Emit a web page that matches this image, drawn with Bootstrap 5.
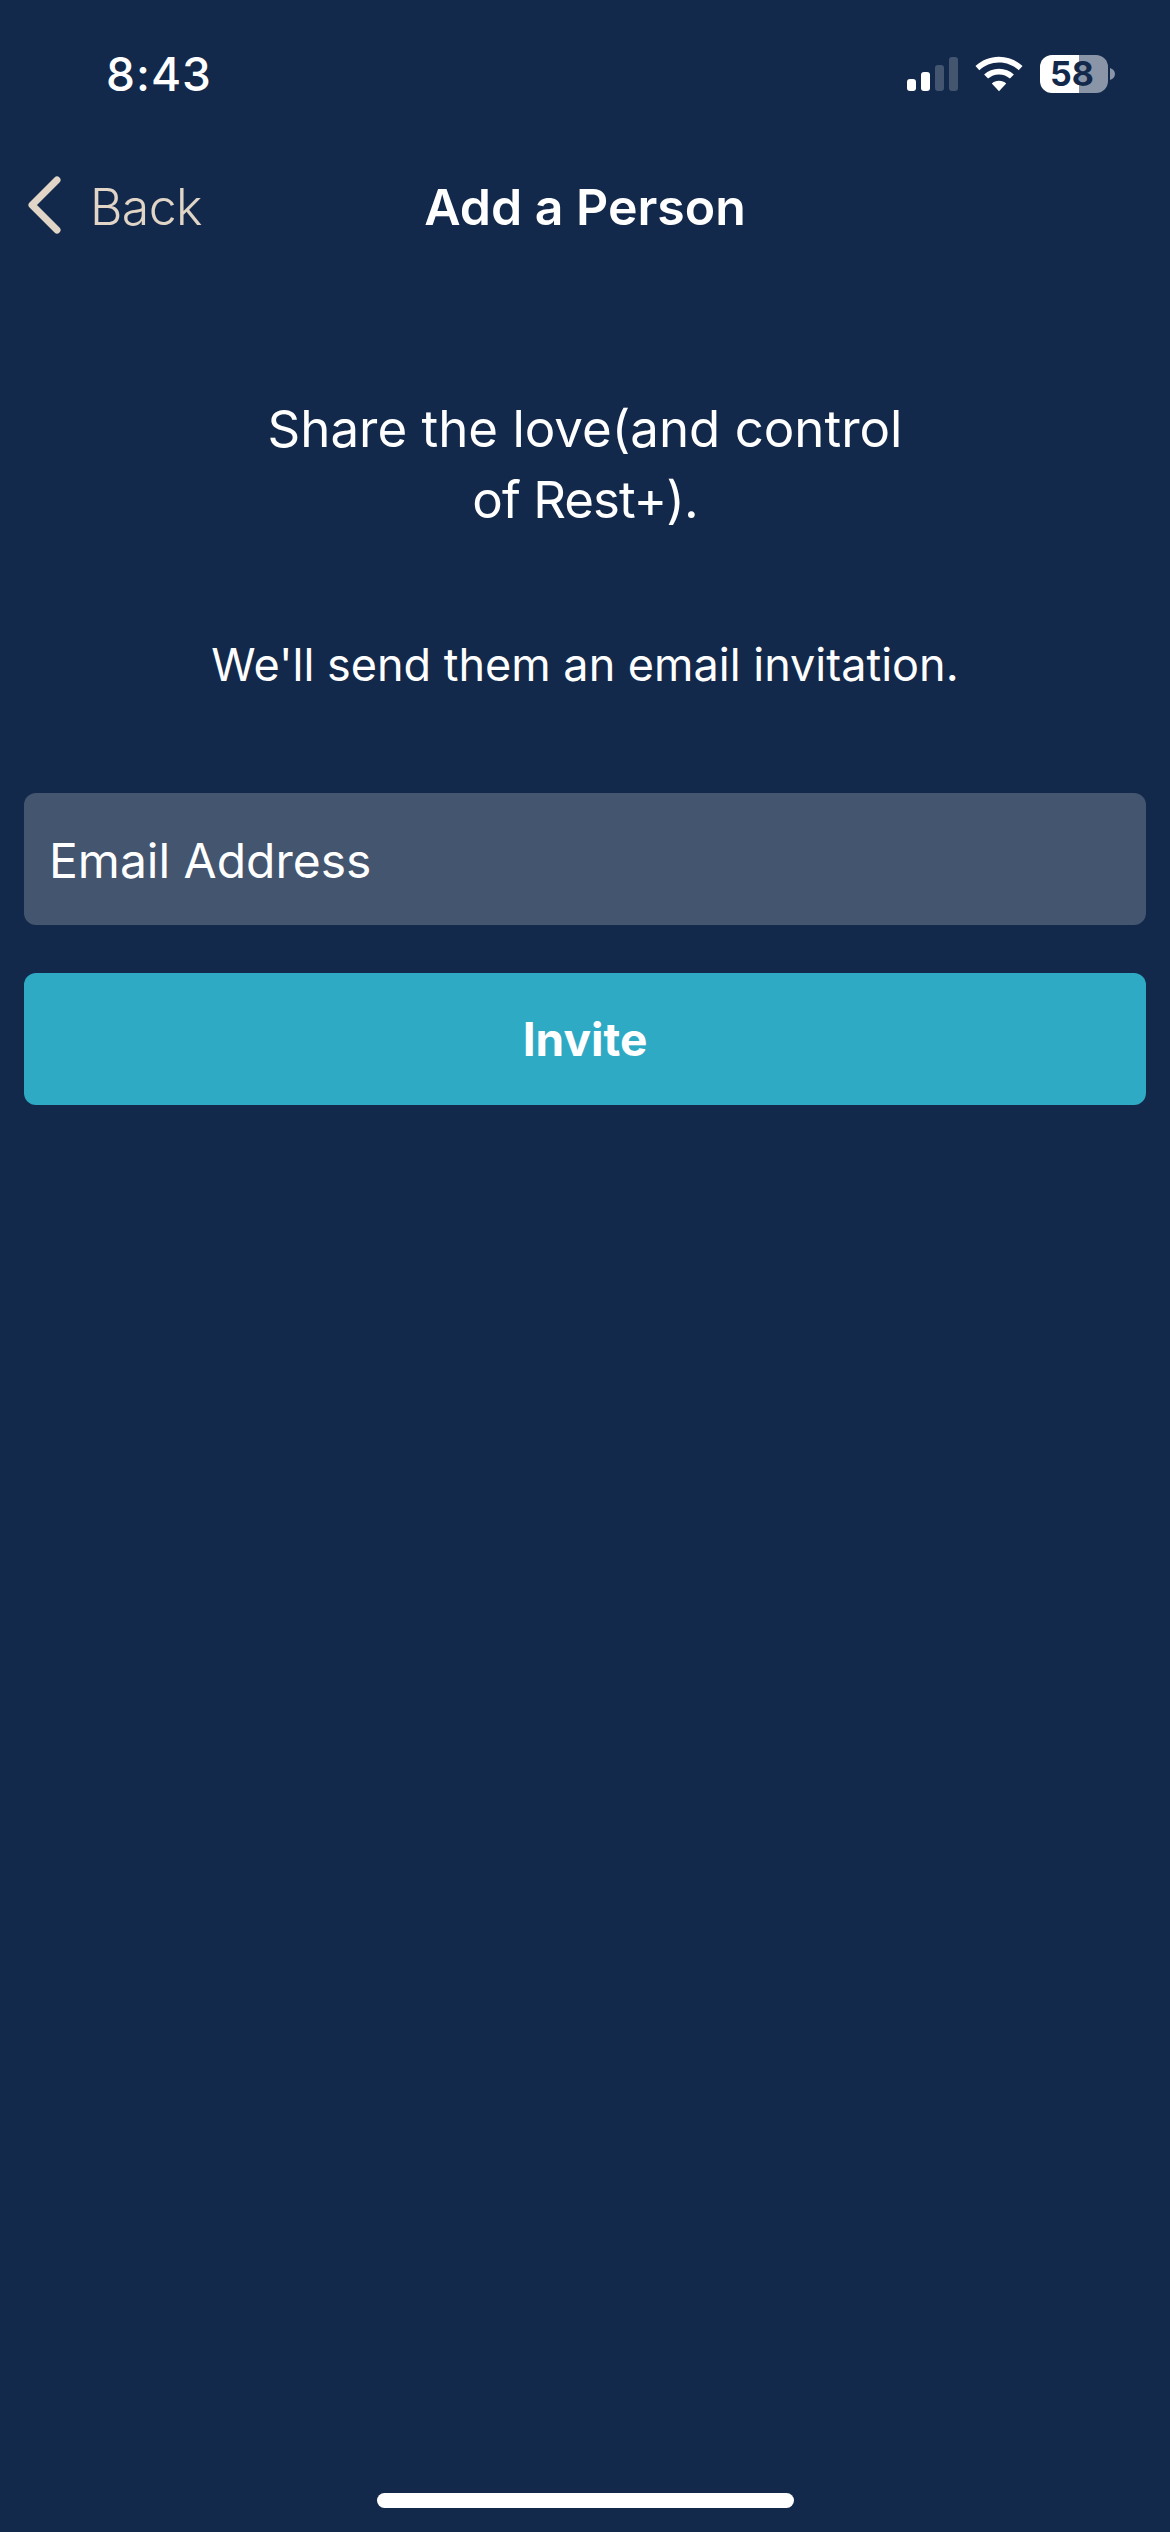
<!doctype html>
<html lang="en"><head><meta charset="utf-8"><title>Add a Person</title>
<link href="https://cdn.jsdelivr.net/npm/bootstrap@5.3.0/dist/css/bootstrap.min.css" rel="stylesheet">
<style>
html,body{height:100%}
body{background:#13294b;color:#fff;font-family:"Inter","Liberation Sans",sans-serif;width:1170px;height:2532px;overflow:hidden}
.shell{height:2532px}
.statusrow{height:150px;padding:51px 55px 0 106px}
.clock{font-size:46px;line-height:46px;font-weight:500;letter-spacing:1px}
.sysicons{gap:17px;height:46px}
.battcell{width:68px;height:38px;border-radius:12px;background:linear-gradient(90deg,#fff 39px,#8a96a8 39px);color:#13294b;font-size:34px;line-height:38px;font-weight:700;padding-right:4px}
.battwrap{gap:2px}
.navrow{height:114px;padding:0 24px}
.navside{flex:1 1 0}
.backlink{color:#e0d5c7;font-size:50px;line-height:60px;font-weight:350;gap:28px;text-decoration:none;letter-spacing:-.6px}
.backlabel{padding-top:3px}
.pagetitle{font-size:50px;line-height:60px;font-weight:600;margin:0}
.headline{font-size:51px;line-height:71px;margin:0;padding-top:129px}
.tightline{letter-spacing:-1px}
.subline{font-size:45px;line-height:60px;margin:0;padding-top:100px}
.formarea{padding:0 24px;margin-top:98px;gap:48px}
.emailbox.form-control{height:132px;background:#44556f;border:0;border-radius:12px;color:#fff;font-size:48px;font-weight:400;padding:2px 25px 0}
.emailbox.form-control::placeholder{color:#fff;opacity:1}
.invitebtn.btn{height:132px;background:#2faac4;border:0;border-radius:12px;color:#fff;font-size:46px;font-weight:700}
.homebar{width:417px;height:15px;background:#fff;border-radius:8px;bottom:24px;left:377px}
</style></head>
<body>
<div class="shell position-relative d-flex flex-column">
  <div class="statusrow d-flex justify-content-between align-items-start">
    <span class="clock">8:43</span>
    <div class="sysicons d-flex align-items-center">
      <svg width="51" height="34" viewBox="0 0 51 34"><rect x="0" y="22" width="9" height="12" rx="3" fill="#fff"/><rect x="14" y="15" width="9" height="19" rx="3" fill="#fff"/><rect x="28" y="8" width="9" height="26" rx="3" fill="#44556f"/><rect x="42" y="0" width="9" height="34" rx="3" fill="#44556f"/></svg>
      <svg width="48" height="36" viewBox="0 0 50 36"><path d="M25 0C15.500 0 7 3.700 .5 9.700L4.500 14C10 9 17 6 25 6s15 3 20.500 8l4-4.300C43 3.700 34.500 0 25 0z" fill="#fff"/><path d="M25 12.500c-6 0-11.400 2.300-15.500 6l4.100 4.300c3-2.700 7-4.300 11.400-4.300s8.400 1.600 11.400 4.300l4.100-4.300c-4.100-3.700-9.500-6-15.500-6z" fill="#fff"/><path d="M25 25c-3 0-5.500 1.100-7.500 2.900L25 36l7.500-8.100C30.500 26.100 28 25 25 25z" fill="#fff"/></svg>
      <div class="battwrap d-flex align-items-center">
        <div class="battcell text-center">58</div>
        <svg width="5" height="12" viewBox="0 0 5 12"><path d="M0 0c3 1 5 3 5 6s-2 5-5 6z" fill="#8a96a8"/></svg>
      </div>
    </div>
  </div>
  <div class="navrow d-flex align-items-center">
    <div class="navside">
      <a href="#" class="backlink d-inline-flex align-items-center">
        <svg width="38" height="58" viewBox="0 0 38 58"><path d="M33 4 8 29l25 25" fill="none" stroke="#e0d5c7" stroke-width="7" stroke-linecap="round" stroke-linejoin="round"/></svg>
        <span class="backlabel">Back</span>
      </a>
    </div>
    <h1 class="pagetitle">Add a Person</h1>
    <div class="navside"></div>
  </div>
  <p class="headline text-center">Share the love(and control<br><span class="tightline">of Rest+).</span></p>
  <p class="subline text-center">We'll send them an email invitation.</p>
  <form class="formarea d-flex flex-column">
    <input type="email" class="emailbox form-control" placeholder="Email Address" aria-label="Email Address">
    <button type="button" class="invitebtn btn w-100">Invite</button>
  </form>
  <div class="homebar position-absolute"></div>
</div>
<script src="https://cdn.jsdelivr.net/npm/bootstrap@5.3.0/dist/js/bootstrap.bundle.min.js"></script>
</body></html>
